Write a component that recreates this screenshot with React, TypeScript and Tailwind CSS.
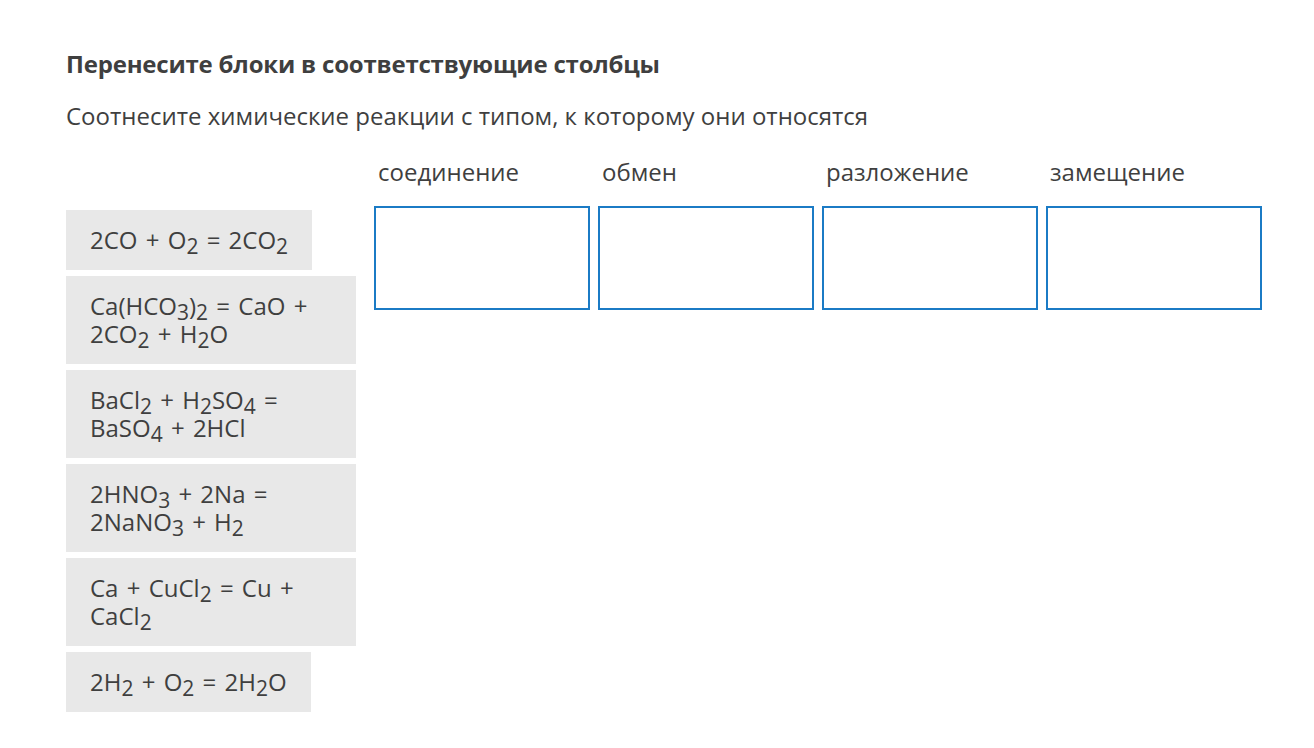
const items: { key: string; parts: (string | [string])[] }[] = [
  { key: "a", parts: ["2CO + O", ["2"], " = 2CO", ["2"]] },
  { key: "b", parts: ["Ca(HCO", ["3"], ")", ["2"], " = CaO + 2CO", ["2"], " + H", ["2"], "O"] },
  { key: "c", parts: ["BaCl", ["2"], " + H", ["2"], "SO", ["4"], " = BaSO", ["4"], " + 2HCl"] },
  { key: "d", parts: ["2HNO", ["3"], " + 2Na = 2NaNO", ["3"], " + H", ["2"]] },
  { key: "e", parts: ["Ca + CuCl", ["2"], " = Cu + CaCl", ["2"]] },
  { key: "f", parts: ["2H", ["2"], " + O", ["2"], " = 2H", ["2"], "O"] },
];

const columns = ["соединение", "обмен", "разложение", "замещение"];

function Formula({ parts }: { parts: (string | [string])[] }) {
  return (
    <>
      {parts.map((p, i) =>
        typeof p === "string" ? (
          <span key={i}>{p}</span>
        ) : (
          <span key={i} className="text-[21px] relative top-[5px] leading-none">
            {p[0]}
          </span>
        )
      )}
    </>
  );
}

export default function App() {
  return (
    <div className="min-h-screen bg-white text-[#3f3f3f] pt-[46px] pl-[66px]" style={{ fontFamily: '"Open Sans", "Liberation Sans", sans-serif' }}>
      <h2 className="text-[24px] font-bold leading-[36px] tracking-[-0.2px]">Перенесите блоки в соответствующие столбцы</h2>
      <p className="text-[24px] leading-[36px] mt-[16px]">Соотнесите химические реакции с типом, к которому они относятся</p>

      <div className="flex mt-[20px]">
        <div className="w-[290px] shrink-0 pt-[56px] flex flex-col gap-[6px]">
          {items.map((it) => (
            <div key={it.key} className="w-fit max-w-[290px] bg-[#e8e8e8] px-[24px] py-[16px] text-[24px] leading-[28px] [word-spacing:2px]">
              <Formula parts={it.parts} />
            </div>
          ))}
        </div>

        <div className="ml-[18px] grid grid-cols-4 gap-x-[8px] w-[888px] h-fit">
          {columns.map((c) => (
            <div key={c} className="flex flex-col">
              <div className="text-[24px] leading-[36px] pl-[4px] h-[52px]">{c}</div>
              <div className="h-[104px] border-2 border-[#1b7bc5]" />
            </div>
          ))}
        </div>
      </div>
    </div>
  );
}
